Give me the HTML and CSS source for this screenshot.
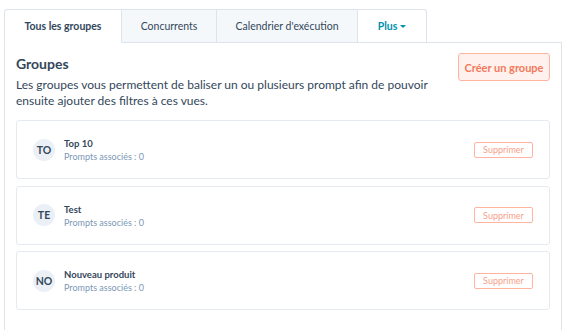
FILE: index.html
```html
<!DOCTYPE html>
<html lang="fr">
<head>
  <meta charset="UTF-8" />
  <meta name="viewport" content="width=device-width, initial-scale=1" />
  <title>Groupes</title>
  <link rel="stylesheet" href="styles.css">
</head>
<body>

  <div class="tabs">
    <div class="tab active tab-all">Tous les groupes</div>
    <div class="tab tab-comp">Concurrents</div>
    <div class="tab tab-cal">Calendrier d'exécution</div>
    <div class="tab tab-more">Plus <span class="caret"></span></div>
  </div>

  <div class="panel">
    <div class="panel-head">
      <div>
        <h2>Groupes</h2>
        <p>Les groupes vous permettent de baliser un ou plusieurs prompt afin de pouvoir ensuite ajouter des filtres à ces vues.</p>
      </div>
      <button class="btn-create">Créer un groupe</button>
    </div>

    <div class="group">
      <div class="avatar">TO</div>
      <div class="info">
        <div class="name">Top 10</div>
        <div class="count">Prompts associés : 0</div>
      </div>
      <button class="btn-delete">Supprimer</button>
    </div>

    <div class="group">
      <div class="avatar">TE</div>
      <div class="info">
        <div class="name">Test</div>
        <div class="count">Prompts associés : 0</div>
      </div>
      <button class="btn-delete">Supprimer</button>
    </div>

    <div class="group">
      <div class="avatar">NO</div>
      <div class="info">
        <div class="name">Nouveau produit</div>
        <div class="count">Prompts associés : 0</div>
      </div>
      <button class="btn-delete">Supprimer</button>
    </div>
  </div>

</body>
</html>
```

FILE: styles.css
```css
body {
  margin: 0;
  padding: 9px 5px 0 4px;
  background: #fff;
  font-family: Lato, "Open Sans", sans-serif;
  color: #33475b;
}
.tabs {
  display: flex;
  height: 34px;
}
.tab {
  display: flex;
  align-items: center;
  justify-content: center;
  box-sizing: border-box;
  height: 34px;
  font-size: 10.5px;
  color: #33475b;
  background: #f5f8fa;
  border: 1px solid #dfe3eb;
  border-left: none;
}
.tab.active {
  background: #fff;
  border-left: 1px solid #dfe3eb;
  border-bottom-color: #fff;
  font-weight: 700;
  border-radius: 3px 0 0 0;
}
.tab-all { width: 118px; }
.tab-comp { width: 95px; }
.tab-cal { width: 141px; }
.tab-more {
  width: 69px;
  background: #fff;
  color: #0091ae;
  font-weight: 700;
  border-radius: 0 3px 0 0;
}
.caret {
  display: inline-block;
  margin-left: 3px;
  border-left: 3px solid transparent;
  border-right: 3px solid transparent;
  border-top: 3px solid #0091ae;
}
.panel {
  box-sizing: border-box;
  margin-top: -1px;
  border: 1px solid #dfe3eb;
  border-bottom: none;
  padding: 10px 11px 0 11px;
  min-height: 288px;
}
.panel-head {
  display: flex;
  justify-content: space-between;
  align-items: flex-start;
  margin-bottom: 11px;
}
.panel-head h2 {
  margin: 2px 0 4px;
  font-size: 14px;
  font-weight: 700;
  line-height: 18px;
}
.panel-head p {
  margin: 0;
  width: 436px;
  font-size: 12px;
  line-height: 16px;
}
.btn-create {
  box-sizing: border-box;
  width: 92px;
  height: 28px;
  padding: 0;
  font-family: inherit;
  font-size: 11px;
  font-weight: 700;
  color: #f27a5c;
  background: #fff1ed;
  border: 1px solid #ffb3a1;
  border-radius: 3px;
}
.group {
  display: flex;
  align-items: center;
  box-sizing: border-box;
  height: 59px;
  margin-bottom: 6.5px;
  padding: 0 16px;
  border: 1px solid #e5e9f0;
  border-radius: 3px;
}
.avatar {
  display: flex;
  align-items: center;
  justify-content: center;
  width: 22px;
  height: 22px;
  margin-right: 9px;
  border-radius: 50%;
  background: #eaf0f6;
  font-size: 10.5px;
  font-weight: 700;
  color: #33475b;
}
.info {
  flex: 1;
  padding-top: 3px;
}
.name {
  font-size: 9.5px;
  font-weight: 700;
  line-height: 12px;
}
.count {
  font-size: 9px;
  color: #7c98b6;
  line-height: 14px;
}
.btn-delete {
  box-sizing: border-box;
  width: 59px;
  height: 16px;
  padding: 0;
  font-family: inherit;
  font-size: 9px;
  color: #f8a08a;
  background: #fff;
  border: 1px solid #ffb3a1;
  border-radius: 2px;
}
```
